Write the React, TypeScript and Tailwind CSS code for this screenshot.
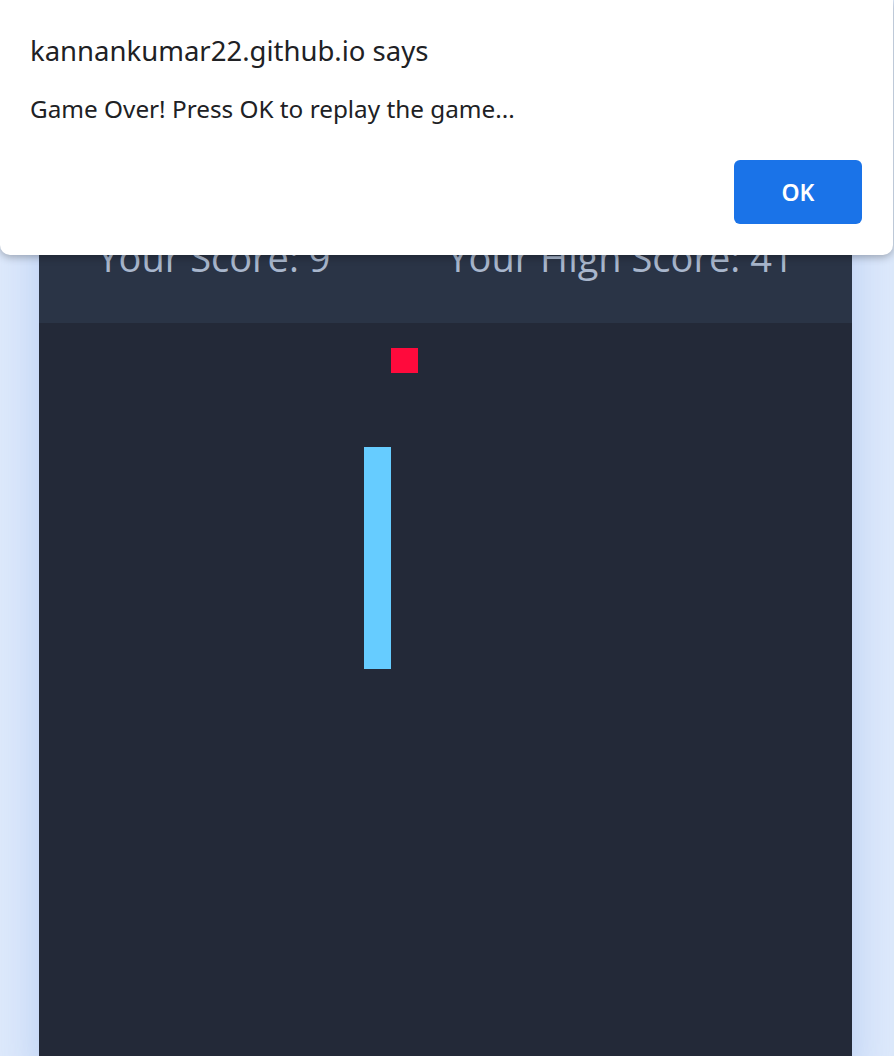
export default function App() {
  return (
    <div className="relative min-h-[1056px] overflow-hidden bg-[#dde9fb]" style={{ fontFamily: '"Open Sans", sans-serif' }}>
      {/* game panel */}
      <div className="mx-[39px] mt-[191px] w-[813px] shadow-[0_0_40px_rgba(110,150,230,0.35)]">
        <div className="flex justify-around bg-[#2a3446] pt-[40px] pb-[40px] text-[38px] leading-[52px] text-[#a8b6cc]">
          <span>Your Score: 9</span>
          <span>Your High Score: 41</span>
        </div>
        <div className="relative h-[760px] bg-[#232938]">
          <div className="absolute left-[352px] top-[25px] h-[25px] w-[27px] bg-[#ff0a3c]" />
          <div className="absolute left-[325px] top-[124px] h-[222px] w-[27px] bg-[#66ccff]" />
        </div>
      </div>

      {/* alert dialog */}
      <div
        className="absolute left-0 top-0 h-[255px] w-[893px] rounded-b-[10px] bg-white shadow-[0_2px_8px_rgba(0,0,0,0.3)]"
        style={{ fontFamily: '"Noto Sans", sans-serif' }}
      >
        <div className="px-[30px] pt-[32px] text-[27.5px] leading-[38px] text-[#202124]">kannankumar22.github.io says</div>
        <div className="px-[30px] pt-[23px] text-[24.3px] leading-[32px] text-[#202124]">Game Over! Press OK to replay the game...</div>
        <div className="flex justify-end pr-[31px] pt-[35px]">
          <button className="h-[64px] w-[128px] rounded-[6px] bg-[#1a73e8] text-[23px] font-semibold text-white">OK</button>
        </div>
      </div>
    </div>
  );
}
